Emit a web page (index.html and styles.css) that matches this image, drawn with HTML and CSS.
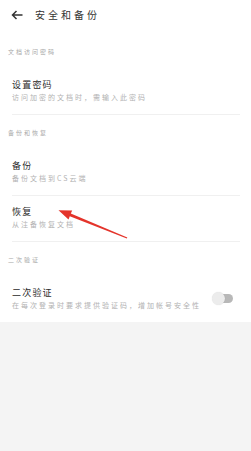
FILE: index.html
```html
<!DOCTYPE html>
<html lang="zh-CN">
<head>
<meta charset="utf-8">
<link rel="stylesheet" href="styles.css">
</head>
<body>
<div class="page">
  <div class="sheet">
    <div class="topbar">
      <svg class="back" width="12" height="10" viewBox="0 0 12 10"><path d="M11.5 5H1.5M5.5 1L1.5 5L5.5 9" fill="none" stroke="#333" stroke-width="1.5" stroke-linejoin="miter"/></svg>
      <span class="title">安全和备份</span>
    </div>

    <div class="sect">文档访问密码</div>
    <div class="item">
      <div class="txt">
        <div class="it">设置密码</div>
        <div class="sub">访问加密的文档时，需输入此密码</div>
      </div>
    </div>

    <div class="sect">备份和恢复</div>
    <div class="item">
      <div class="txt">
        <div class="it">备份</div>
        <div class="sub">备份文档到CS云端</div>
      </div>
    </div>
    <div class="item">
      <div class="txt">
        <div class="it">恢复</div>
        <div class="sub">从注备恢复文档</div>
      </div>
    </div>

    <div class="sect">二次验证</div>
    <div class="item last">
      <div class="txt">
        <div class="it">二次验证</div>
        <div class="sub">在每次登录时要求提供验证码，增加帐号安全性</div>
      </div>
      <span class="toggle"><span class="knob"></span></span>
    </div>
  </div>

  <svg class="pointer" width="251" height="451" viewBox="0 0 251 451">
    <polygon fill="#e4342b" points="58.5,210.3 68.5,219.5 69.8,216.3 126.8,238.6 127.3,237.4 70.8,213.6 72.2,210.4"/>
  </svg>
</div>
</body>
</html>
```

FILE: styles.css
```css
html, body {
  margin: 0;
  padding: 0;
}
body {
  width: 251px;
  height: 451px;
  background: #f4f4f4;
  font-family: "Noto Sans CJK SC", "Noto Sans", sans-serif;
  overflow: hidden;
}
.page {
  position: relative;
  width: 251px;
  height: 451px;
}
.sheet {
  background: #fff;
}
.topbar {
  height: 34px;
  display: flex;
  align-items: flex-start;
  padding-top: 9px;
  box-sizing: border-box;
}
.back {
  margin-left: 11px;
  margin-top: 1px;
}
.title {
  margin-left: 12px;
  font-size: 10px;
  line-height: 12px;
  letter-spacing: 3px;
  color: #333;
}
.sect {
  height: 35px;
  box-sizing: border-box;
  padding: 13px 0 0 8px;
  font-size: 6px;
  line-height: 10px;
  letter-spacing: 2px;
  color: #a8a8a8;
}
.item {
  display: flex;
  align-items: center;
  margin: 0 11px 0 12px;
  padding: 9px 0 11px 0;
  border-bottom: 1px solid #f0f0f0;
}
.item.last {
  border-bottom: none;
}
.txt {
  flex: 1;
}
.it {
  font-size: 9px;
  line-height: 13px;
  letter-spacing: 1.2px;
  color: #2a2a2a;
  font-weight: 400;
}
.sub {
  font-size: 7px;
  line-height: 12px;
  letter-spacing: 2px;
  color: #b2b2b2;
  white-space: nowrap;
}
.toggle {
  position: relative;
  width: 20px;
  height: 9px;
  border-radius: 5px;
  background: #b8b8b8;
  margin-right: 7px;
}
.knob {
  position: absolute;
  left: -1px;
  top: -2px;
  width: 13px;
  height: 13px;
  border-radius: 50%;
  background: #ececec;
  box-shadow: 0 0 1px rgba(0,0,0,0.15);
}
.pointer {
  position: absolute;
  left: 0;
  top: 0;
  pointer-events: none;
}
```
